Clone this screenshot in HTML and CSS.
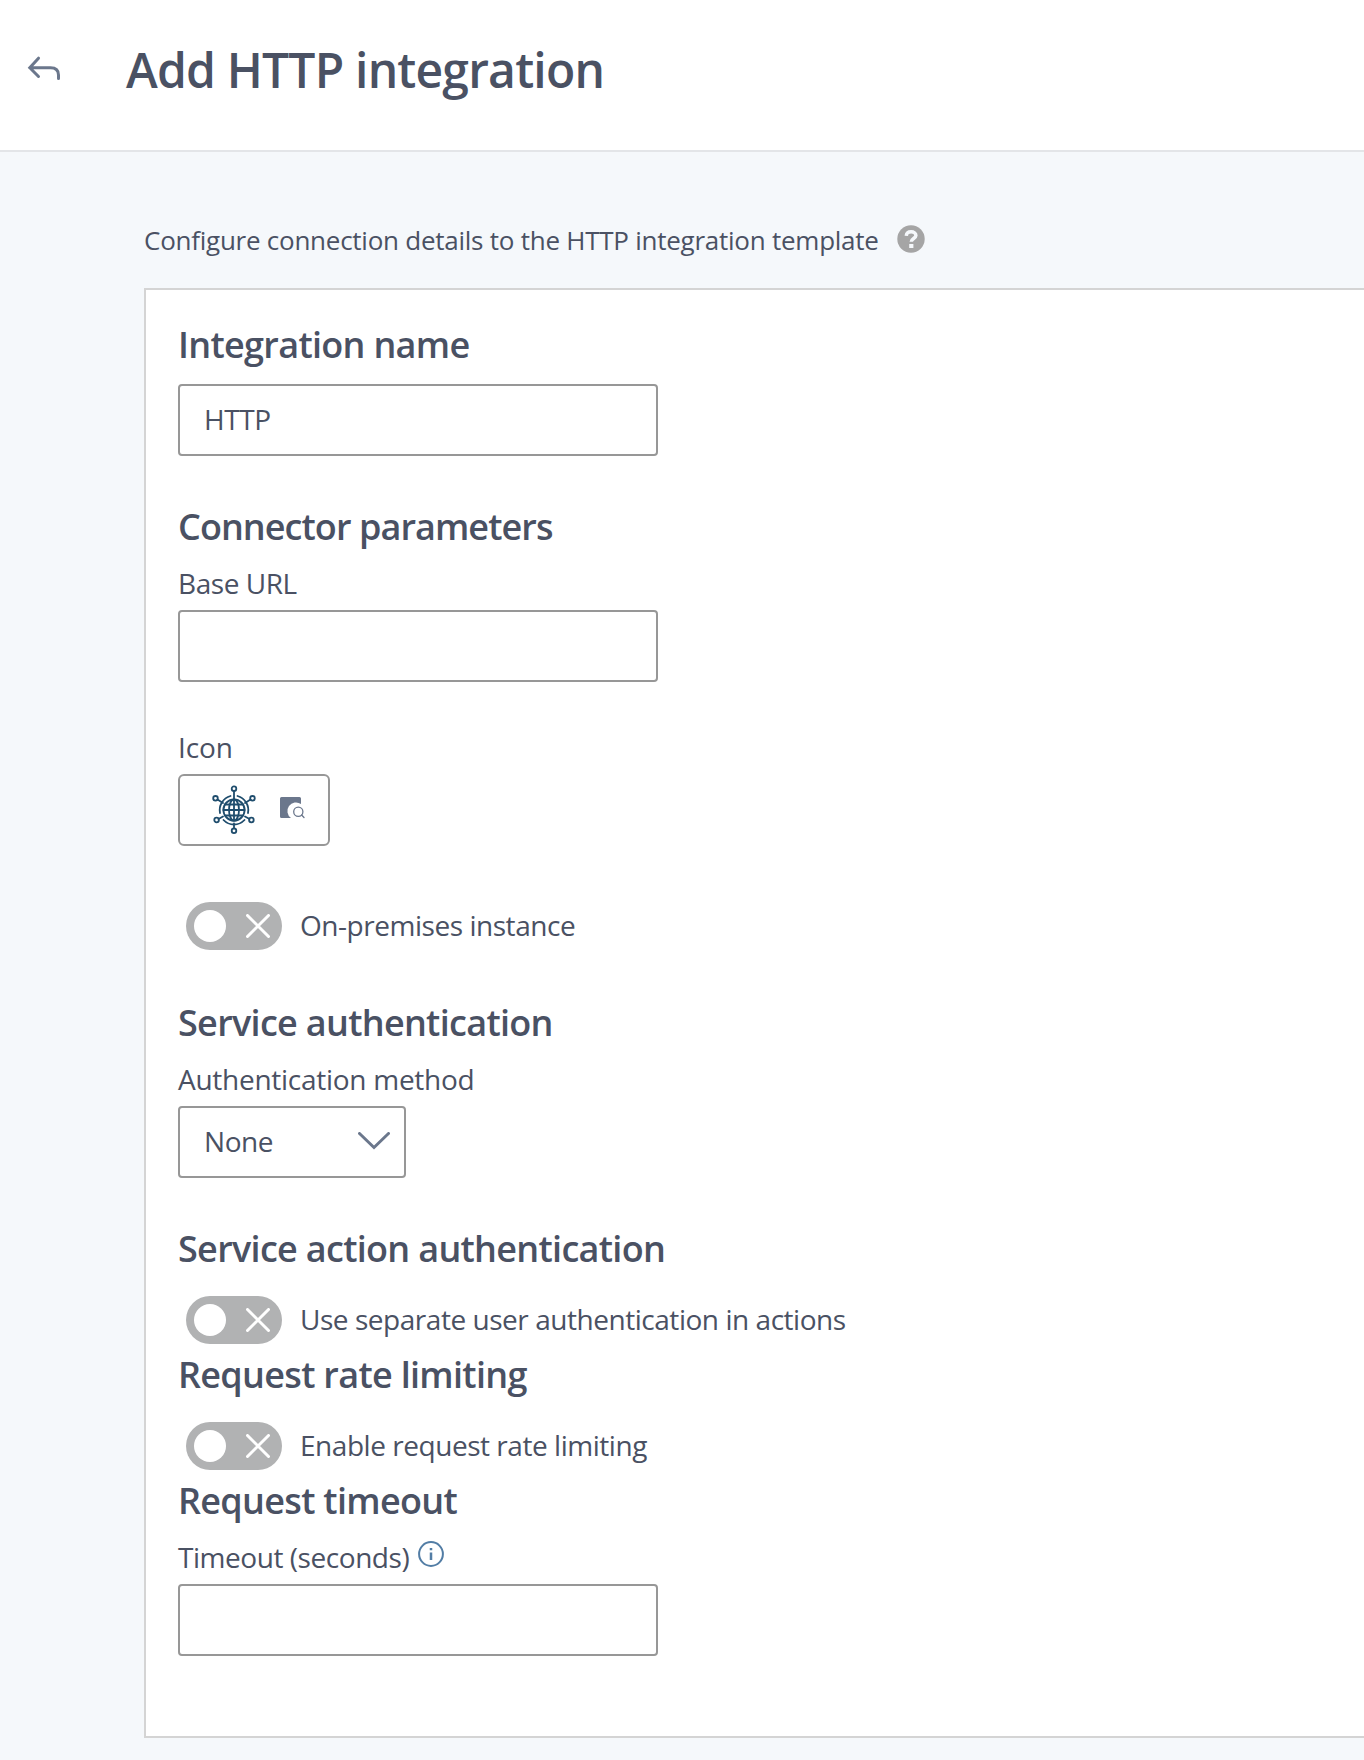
FILE: index.html
```html
<!DOCTYPE html>
<html lang="en">
<head>
<meta charset="utf-8">
<title>Add HTTP integration</title>
<link rel="stylesheet" href="styles.css">
</head>
<body>
<svg class="sprite" aria-hidden="true">
  <symbol id="cross" viewBox="0 0 24 24"><path d="M1.500 1.500l21 21M22.500 1.500l-21 21"/></symbol>
</svg>
<header class="topbar">
  <svg class="back" viewBox="0 0 36 28"><path d="M11.500 3.200L2.800 12.700L11.500 21.500M2.800 12.700H23.500C29 12.700 31.500 15.500 31.500 20V23.500"/></svg>
  <h1 class="title">Add HTTP integration</h1>
</header>
<main class="content">
  <div class="intro">
    <p class="intro-text">Configure connection details to the HTTP integration template</p>
    <svg class="help" viewBox="0 0 28 28"><circle cx="14" cy="14" r="13.700"/><path d="M9.300 10.800C9.500 7.900 11.500 6.800 14.100 6.800C16.800 6.800 18.900 8.200 18.900 10.600C18.900 13.500 14.300 13.600 14.300 16.700"/><rect x="12.200" y="19" width="4.200" height="4"/></svg>
  </div>
  <section class="card">
    <section class="group">
      <h2 class="heading">Integration name</h2>
      <div class="box input">HTTP</div>
    </section>
    <section class="group">
      <h2 class="heading snug">Connector parameters</h2>
      <div class="label">Base URL</div>
      <div class="box input"></div>
      <div class="label label-icon">Icon</div>
      <div class="box picker">
        <svg class="globe" viewBox="0 0 44 50">
          <circle cx="22" cy="25" r="10.600"/>
          <ellipse cx="22" cy="25" rx="5" ry="10.600"/>
          <path d="M22 14.400V35.600M11.400 25H32.600M13 19.500H31M13 30.500H31"/>
          <path d="M8 28A14.500 14.500 0 0 1 18.500 11M25.500 11A14.500 14.500 0 0 1 36 28M11.500 35A14.500 14.500 0 0 0 32.500 35"/>
          <path d="M22 6V14.400M22 38.500V43M5.500 14.500L11 18M38.500 14.500L33 18M6.500 34L11 31.500M37.500 34L33 31.500"/>
          <circle cx="22" cy="3.700" r="2.300"/><circle cx="22" cy="45.800" r="2.300"/><circle cx="3.500" cy="13.300" r="2.300"/><circle cx="40.500" cy="13.300" r="2.300"/><circle cx="4.600" cy="35" r="2.300"/><circle cx="39.400" cy="35" r="2.300"/>
        </svg>
        <svg class="browse" viewBox="0 0 24 22"><path class="sheet" d="M1.500 0H19.500Q21 0 21 1.500V7A8.500 8.500 0 0 0 11 21H1.500Q0 21 0 19.500V1.500Q0 0 1.500 0Z"/><path class="lens" d="M21.600 18L24 20.500"/><circle class="lens" cx="18.300" cy="14.700" r="4.600"/></svg>
      </div>
      <div class="switch-row first">
        <span class="switch"><i class="knob"></i><svg class="cross"><use href="#cross"/></svg></span>
        <div class="switch-text">On-premises instance</div>
      </div>
    </section>
    <section class="group auth">
      <h2 class="heading">Service authentication</h2>
      <div class="label label-method">Authentication method</div>
      <div class="box select">None<svg class="chevron" viewBox="0 0 32 18"><path d="M1.500 1.500L16 15.500L30.500 1.500"/></svg></div>
    </section>
    <section class="group">
      <h2 class="heading">Service action authentication</h2>
      <div class="switch-row">
        <span class="switch"><i class="knob"></i><svg class="cross"><use href="#cross"/></svg></span>
        <div class="switch-text">Use separate user authentication in actions</div>
      </div>
    </section>
    <section class="group tight">
      <h2 class="heading">Request rate limiting</h2>
      <div class="switch-row">
        <span class="switch"><i class="knob"></i><svg class="cross"><use href="#cross"/></svg></span>
        <div class="switch-text">Enable request rate limiting</div>
      </div>
    </section>
    <section class="group tight">
      <h2 class="heading">Request timeout</h2>
      <div class="label">Timeout (seconds)<svg class="info" viewBox="0 0 26 26"><circle cx="13" cy="13" r="11.900"/><path d="M13 11.500V19M13 7.100V9.300"/></svg></div>
      <div class="box input"></div>
    </section>
  </section>
</main>
</body>
</html>
```
FILE: styles.css
```css
* { box-sizing: border-box; }
body {
  margin: 0;
  background: #f5f8fb;
  color: #4a5163;
  font-family: "Open Sans", "Noto Sans", sans-serif;
}
h1, h2, p { margin: 0; }
svg { display: block; flex: none; fill: none; stroke-linecap: round; }
.sprite { position: absolute; width: 0; height: 0; }
.topbar {
  display: flex;
  height: 152px;
  padding: 37px 0 0 27px;
  background: #fff;
  border-bottom: 2px solid #e3e5e8;
}
.back { width: 36px; height: 28px; margin-top: 18px; stroke: #6b778c; stroke-width: 3; }
.title {
  margin-left: 63px;
  font-size: 48px;
  line-height: 66px;
  font-weight: 600;
  letter-spacing: -0.8px;
  white-space: nowrap;
}
.content { padding: 70px 0 22px 144px; }
.intro { display: flex; height: 66px; }
.intro-text { font-size: 26px; line-height: 36px; letter-spacing: -0.25px; white-space: nowrap; }
.help { width: 28px; height: 28px; margin: 3px 0 0 18px; fill: #a5a5a5; }
.help path { fill: none; stroke: #f5f8fb; stroke-width: 3.5; stroke-linecap: butt; }
.help rect { fill: #f5f8fb; }
.card {
  height: 1450px;
  padding: 30px 0 0 32px;
  background: #fff;
  border: 2px solid #d4d4d4;
  border-right: 0;
}
.group + .group { margin-top: 46px; }
.group + .auth { margin-top: 48px; }
.group + .tight { margin-top: 6px; }
.heading {
  padding-top: 2px;
  font-size: 36px;
  line-height: 46px;
  font-weight: 600;
  letter-spacing: -0.69px;
  white-space: nowrap;
}
.heading.snug { letter-spacing: -0.93px; }
.heading + .box { margin-top: 16px; }
.label { display: flex; margin: 14px 0 8px; font-size: 28px; line-height: 38px; letter-spacing: -0.45px; }
.label-icon { margin-top: 46px; letter-spacing: -0.1px; }
.label-method { letter-spacing: -0.27px; }
.box {
  display: flex;
  align-items: center;
  height: 72px;
  padding: 0 0 2px 24px;
  background: #fff;
  border: 2px solid #979797;
  border-radius: 4px;
  font-size: 28px;
  letter-spacing: -0.45px;
}
.input { width: 480px; }
.picker { width: 152px; padding-left: 32px; border-radius: 6px; }
.globe { width: 44px; height: 50px; margin-top: 1px; stroke: #1f4d6d; stroke-width: 1.8; }
.browse { width: 24px; height: 22px; margin: -2px 0 0 24px; overflow: visible; }
.sheet { fill: #6b778c; }
.lens { stroke: #6b778c; stroke-width: 1.3; }
.select { width: 228px; padding-right: 14px; justify-content: space-between; }
.chevron { width: 32px; height: 18px; stroke: #6b778c; stroke-width: 3; }
.switch-row { display: flex; align-items: center; height: 48px; margin: 24px 0 0 8px; }
.first { margin-top: 56px; }
.switch {
  display: flex;
  align-items: center;
  justify-content: space-between;
  width: 96px;
  height: 48px;
  padding: 0 12px 0 8px;
  background: #b1b2b3;
  border-radius: 24px;
}
.knob { width: 32px; height: 32px; background: #fff; border-radius: 50%; }
.cross { width: 24px; height: 24px; stroke: #fff; stroke-width: 3; }
.switch-text {
  margin-left: 18px;
  padding-bottom: 2px;
  font-size: 28px;
  line-height: 46px;
  letter-spacing: -0.46px;
  white-space: nowrap;
}
.info { width: 26px; height: 26px; margin: 3px 0 0 9px; stroke: #527da5; stroke-width: 2; }
.info path { stroke-linecap: butt; stroke-width: 2.5; }
```
